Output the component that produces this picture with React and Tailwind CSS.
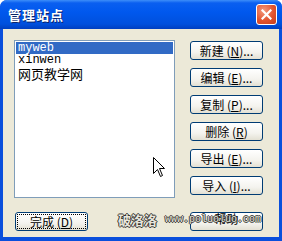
import React from 'react';

function XpButton({ children, focused }) {
  return (
    <div className="h-[19px] w-[73px] rounded-[3px] border border-[#003c74] bg-[linear-gradient(#ffffff,#f4f3ee_60%,#e3e0d3)] flex items-center justify-center p-[2px]">
      <div
        className={
          'flex h-full w-full items-center justify-center text-[12px] leading-none text-black ' +
          (focused ? 'outline-1 outline-dotted outline-black' : '')
        }
      >
        {children}
      </div>
    </div>
  );
}

function Label({ cn, acc, dots }) {
  return (
    <span className="[font-family:'Noto_Sans_CJK_SC',sans-serif] whitespace-pre">
      {cn} (<u>{acc}</u>){dots ? '...' : ''}
    </span>
  );
}

export default function App() {
  return (
    <div className="relative flex h-[241px] w-[282px] flex-col overflow-hidden rounded-t-[7px] bg-[#0a4fdc]">
      {/* title bar */}
      <div className="flex h-[29px] shrink-0 items-center justify-between bg-[linear-gradient(#3d8ef9_0px,#0a5ff0_3px,#0058ee_12px,#0050dd_24px,#003fc0_29px)] pl-[8px] pr-[5px]">
        <span className="[font-family:'Noto_Sans_CJK_SC',sans-serif] text-[13px] font-bold tracking-[1px] text-white [text-shadow:1px_1px_0_#0a246a]">
          管理站点
        </span>
        <div className="mb-[1px] flex h-[21px] w-[21px] items-center justify-center rounded-[3px] border border-white bg-[radial-gradient(circle_at_35%_30%,#f39a7e,#e2532e_55%,#c63d1c)]">
          <svg width="11" height="11" viewBox="0 0 11 11">
            <path d="M1.5 1.5 L9.5 9.5 M9.5 1.5 L1.5 9.5" stroke="white" strokeWidth="2.2" strokeLinecap="square" />
          </svg>
        </div>
      </div>

      {/* body */}
      <div className="mx-[3px] mb-[4px] flex flex-1 flex-col bg-[#ece9d8] pl-[11px] pr-[16px] pt-[11px]">
        <div className="flex gap-[15px]">
          <div className="h-[158px] w-[162px] border border-[#7f9db9] bg-white p-[1px]">
            <div className="h-[12px] bg-[#316ac5] pl-[2px] text-[12px] leading-[12px] text-white [font-family:'Liberation_Mono',monospace]">
              myweb
            </div>
            <div className="h-[12px] pl-[2px] text-[12px] leading-[12px] text-black [font-family:'Liberation_Mono',monospace]">
              xinwen
            </div>
            <div className="mt-[1px] h-[14px] pl-[2px] text-[13px] leading-[14px] text-black [font-family:'Noto_Sans_CJK_SC',sans-serif]">
              网页教学网
            </div>
          </div>
          <div className="flex flex-col gap-[8px] pt-[1px]">
            <XpButton><Label cn="新建" acc="N" dots /></XpButton>
            <XpButton><Label cn="编辑" acc="E" dots /></XpButton>
            <XpButton><Label cn="复制" acc="P" dots /></XpButton>
            <XpButton><Label cn="删除" acc="R" /></XpButton>
            <XpButton><Label cn="导出" acc="E" dots /></XpButton>
            <XpButton><Label cn="导入" acc="I" dots /></XpButton>
          </div>
        </div>
        <div className="mt-[14px] flex items-center justify-between pl-[1px]">
          <XpButton focused><Label cn="完成" acc="D" /></XpButton>
          <XpButton>
            <span className="-mt-[6px] [font-family:'Noto_Sans_CJK_SC',sans-serif]">帮助</span>
          </XpButton>
        </div>
      </div>

      {/* watermark overlay */}
      <div className="absolute left-[118px] top-[213px] flex items-end gap-[8px]">
        <span className="[font-family:'Noto_Sans_CJK_SC',sans-serif] text-[13px] font-bold leading-none text-[#e8e6dc] [text-shadow:1px_0_0_#333,-1px_0_0_#333,0_1px_0_#333,0_-1px_0_#333]">
          破洛洛
        </span>
        <span className="mb-[1px] [font-family:'Liberation_Mono',monospace] text-[10px] leading-none text-[#e8e6dc] [text-shadow:1px_0_0_#333,-1px_0_0_#333,0_1px_0_#333,0_-1px_0_#333]">
          www.poluoluo.com
        </span>
      </div>

      {/* mouse cursor */}
      <svg className="absolute left-[153px] top-[157px]" width="13" height="21" viewBox="0 0 13 21">
        <path d="M0.5 0.5 L0.5 16.5 L4.5 12.5 L7.5 19.5 L9.5 18.5 L6.5 11.5 L11.5 11.5 Z" fill="white" stroke="black" strokeWidth="1" />
      </svg>
    </div>
  );
}
